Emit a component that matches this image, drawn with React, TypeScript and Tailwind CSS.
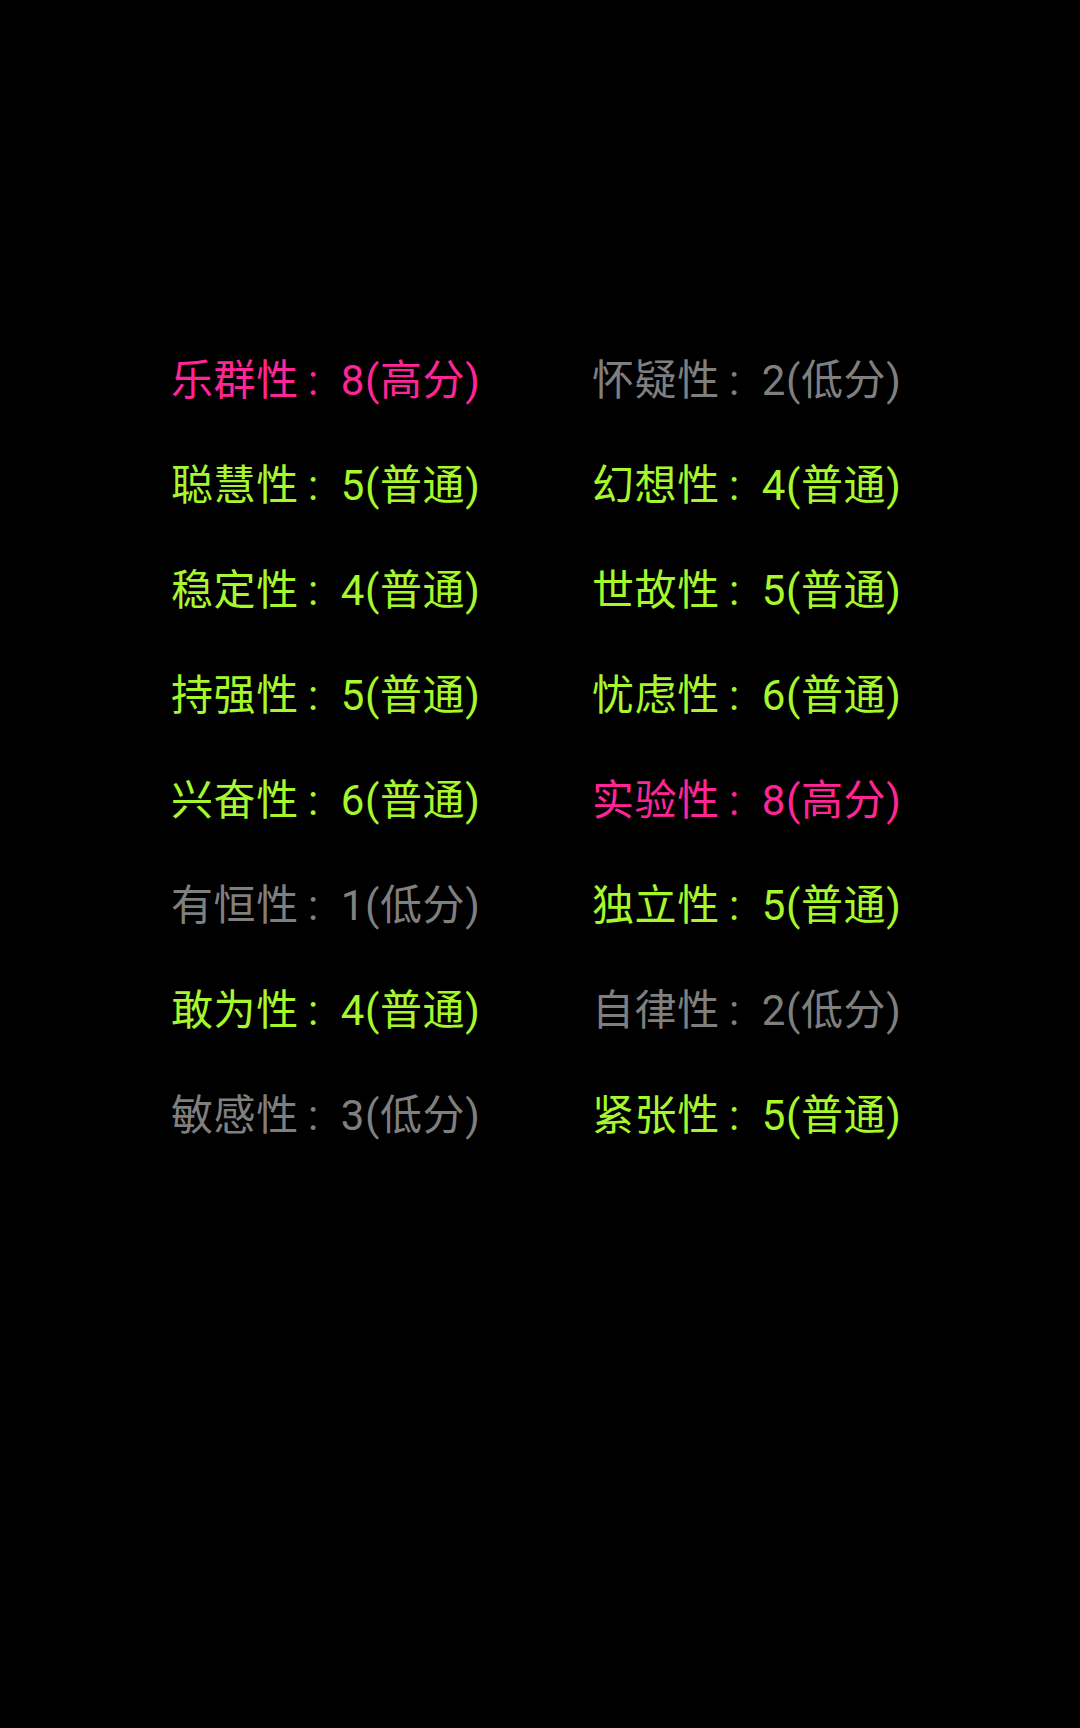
import React from "react";

type Item = { name: string; score: number; level: "高分" | "普通" | "低分" };

const rows: [Item, Item][] = [
  [{ name: "乐群性", score: 8, level: "高分" }, { name: "怀疑性", score: 2, level: "低分" }],
  [{ name: "聪慧性", score: 5, level: "普通" }, { name: "幻想性", score: 4, level: "普通" }],
  [{ name: "稳定性", score: 4, level: "普通" }, { name: "世故性", score: 5, level: "普通" }],
  [{ name: "持强性", score: 5, level: "普通" }, { name: "忧虑性", score: 6, level: "普通" }],
  [{ name: "兴奋性", score: 6, level: "普通" }, { name: "实验性", score: 8, level: "高分" }],
  [{ name: "有恒性", score: 1, level: "低分" }, { name: "独立性", score: 5, level: "普通" }],
  [{ name: "敢为性", score: 4, level: "普通" }, { name: "自律性", score: 2, level: "低分" }],
  [{ name: "敏感性", score: 3, level: "低分" }, { name: "紧张性", score: 5, level: "普通" }],
];

function Cell({ item }: { item: Item }) {
  const cls =
    item.level === "高分"
      ? "text-[#ff2596]"
      : item.level === "普通"
      ? "text-[#a6f82c]"
      : "text-[#7f7f7f]";
  return (
    <div className={`whitespace-nowrap ${cls}`}>
      {item.name}
      <span className="inline-block w-[1em] pl-[0.22em]">:</span>
      {item.score}({item.level})
    </div>
  );
}

export default function App() {
  return (
    <div
      className="w-[1080px] h-[1728px] bg-black pt-[328px] pl-[171px]"
      style={{ fontFamily: '"Roboto", "Noto Sans CJK SC", sans-serif' }}
    >
      <div className="grid grid-cols-[421px_421px] auto-rows-[105px] items-center text-[42px] leading-[105px] tracking-[0.6px]">
        {rows.map(([a, b], i) => (
          <React.Fragment key={i}>
            <Cell item={a} />
            <Cell item={b} />
          </React.Fragment>
        ))}
      </div>
    </div>
  );
}
